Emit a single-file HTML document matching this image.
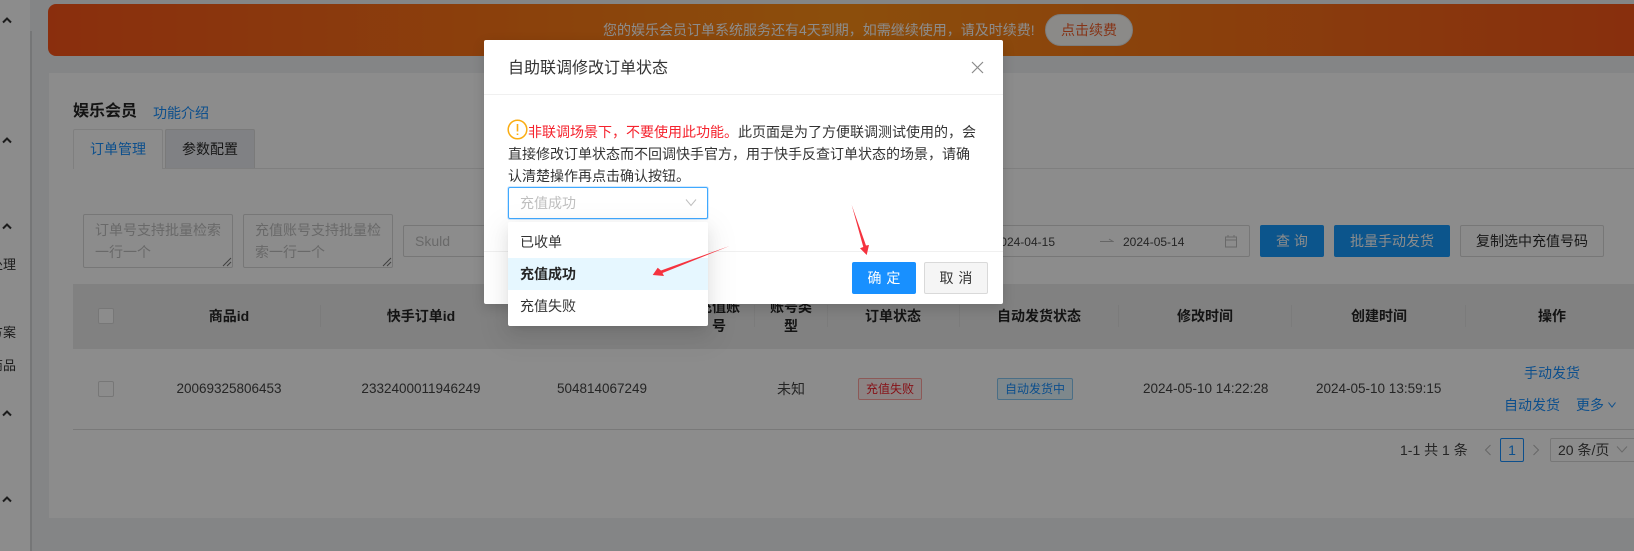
<!DOCTYPE html>
<html lang="zh">
<head>
<meta charset="utf-8">
<title>自助联调修改订单状态</title>
<style>
html,body{margin:0;padding:0;width:1634px;height:551px;overflow:hidden;background:#f0f2f5}
body{position:relative;font-family:"Liberation Sans","Noto Sans CJK SC",sans-serif;font-size:14px;color:#333}
div,span,svg{position:absolute;box-sizing:border-box}
.t{white-space:nowrap;line-height:22px;height:22px}
.c{transform:translateX(-50%);text-align:center}
.h{font-weight:700;color:#262626}
.n{font-size:13.5px;color:#444}
.l{color:#1890ff}
.sep{width:1px;height:22px;top:305px;background:#e0e0e0}
.box{border:1px solid #d9d9d9;border-radius:2px}
.ph{color:#bfbfbf}
.btn{border-radius:2px;text-align:center;height:32px;line-height:30px;white-space:nowrap}
</style>
</head>
<body>
<!-- sidebar -->
<div style="left:0;top:0;width:30px;height:551px;background:#fff"></div>
<div style="left:30px;top:31px;width:2px;height:520px;background:#d6d7d9"></div>
<svg style="left:2px;top:16px" width="10" height="8" viewBox="0 0 10 8"><path d="M1 6.500L5 2.500L9 6.500" fill="none" stroke="#333" stroke-width="2"/></svg>
<svg style="left:2px;top:136px" width="10" height="8" viewBox="0 0 10 8"><path d="M1 6.500L5 2.500L9 6.500" fill="none" stroke="#333" stroke-width="2"/></svg>
<svg style="left:2px;top:222px" width="10" height="8" viewBox="0 0 10 8"><path d="M1 6.500L5 2.500L9 6.500" fill="none" stroke="#333" stroke-width="2"/></svg>
<svg style="left:2px;top:409px" width="10" height="8" viewBox="0 0 10 8"><path d="M1 6.500L5 2.500L9 6.500" fill="none" stroke="#333" stroke-width="2"/></svg>
<svg style="left:2px;top:495px" width="10" height="8" viewBox="0 0 10 8"><path d="M1 6.500L5 2.500L9 6.500" fill="none" stroke="#333" stroke-width="2"/></svg>
<div class="t" style="right:1618px;top:254px;font-size:13px">处理</div>
<div class="t" style="right:1618px;top:322px;font-size:13px">方案</div>
<div class="t" style="right:1618px;top:355px;font-size:13px">商品</div>

<!-- banner -->
<div style="left:48px;top:4px;width:1586px;height:52px;border-radius:8px 0 0 8px;background:linear-gradient(90deg,#fb5519 0%,#ff8f16 50%,#f75619 100%)"></div>
<div class="t" style="left:603px;top:19px;color:#fff">您的娱乐会员订单系统服务还有4天到期，如需继续使用，请及时续费!</div>
<div style="left:1045px;top:14px;width:88px;height:32px;border-radius:16px;background:#fdfbf8;border:1px solid #e4e4e4"></div>
<div class="t" style="left:1061px;top:19px;color:#f4602a">点击续费</div>

<!-- panel -->
<div style="left:49px;top:73px;width:1585px;height:445px;background:#fff"></div>
<div class="t" style="left:73px;top:101px;font-size:16px;font-weight:700;color:#262626">娱乐会员</div>
<div class="t l" style="left:153px;top:102px">功能介绍</div>
<div style="left:73px;top:168px;width:1561px;height:1px;background:#e8e8e8"></div>
<div style="left:73px;top:129px;width:90px;height:40px;background:#fff;border:1px solid #e8e8e8;border-bottom:0;border-radius:2px 2px 0 0"></div>
<div class="t l" style="left:90px;top:138px">订单管理</div>
<div style="left:165px;top:129px;width:90px;height:39px;background:#e9ebf0;border:1px solid #dedede;border-bottom:0;border-radius:2px 2px 0 0"></div>
<div class="t" style="left:182px;top:138px;color:#2a2a2a">参数配置</div>

<!-- filters -->
<div class="box" style="left:83px;top:214px;width:150px;height:54px"></div>
<div class="t ph" style="left:95px;top:219px">订单号支持批量检索</div>
<div class="t ph" style="left:95px;top:241px">一行一个</div>
<svg style="left:222px;top:257px" width="10" height="10" viewBox="0 0 10 10"><path d="M1 9L9 1M5 9L9 5" stroke="#777" fill="none"/></svg>
<div class="box" style="left:243px;top:214px;width:150px;height:54px"></div>
<div class="t ph" style="left:255px;top:219px">充值账号支持批量检</div>
<div class="t ph" style="left:255px;top:241px">索一行一个</div>
<svg style="left:382px;top:257px" width="10" height="10" viewBox="0 0 10 10"><path d="M1 9L9 1M5 9L9 5" stroke="#777" fill="none"/></svg>
<div class="box" style="left:403px;top:225px;width:120px;height:32px"></div>
<div class="t ph" style="left:415px;top:230px">Skuld</div>
<div class="box" style="left:960px;top:225px;width:290px;height:32px"></div>
<div class="t" style="right:579px;top:231px;font-size:12px;color:#444">2024-04-15</div>
<svg style="left:1100px;top:237px" width="14" height="8" viewBox="0 0 14 8"><path d="M0 4.500H13L9 2" fill="none" stroke="#bbb"/></svg>
<div class="t" style="left:1123px;top:231px;font-size:12px;color:#444">2024-05-14</div>
<svg style="left:1224px;top:234px" width="14" height="14" viewBox="0 0 14 14"><path d="M1.500 3H12.500V13H1.500ZM1.500 6H12.500M4 1V3M10 1V3" fill="none" stroke="#bfbfbf"/></svg>
<div class="btn" style="left:1260px;top:225px;width:64px;background:#169cff;color:#fff;line-height:32px">查 询</div>
<div class="btn" style="left:1334px;top:225px;width:116px;background:#169cff;color:#fff;line-height:32px">批量手动发货</div>
<div class="btn" style="left:1460px;top:225px;width:144px;background:#fdfdfd;border:1px solid #d9d9d9;color:#2e2e2e">复制选中充值号码</div>

<!-- table head -->
<div style="left:73px;top:284px;width:1561px;height:65px;background:#ececec"></div>
<div class="box" style="left:98px;top:308px;width:16px;height:16px;background:#fff"></div>
<div class="sep" style="left:320px"></div>
<div class="sep" style="left:754px"></div>
<div class="sep" style="left:827px"></div>
<div class="sep" style="left:959px"></div>
<div class="sep" style="left:1118px"></div>
<div class="sep" style="left:1291px"></div>
<div class="sep" style="left:1465px"></div>
<div class="t c h" style="left:229px;top:305px">商品id</div>
<div class="t c h" style="left:421px;top:305px">快手订单id</div>
<div class="t c h" style="left:719px;top:296px">充值账</div>
<div class="t c h" style="left:719px;top:315px">号</div>
<div class="t c h" style="left:791px;top:296px">账号类</div>
<div class="t c h" style="left:791px;top:315px">型</div>
<div class="t c h" style="left:893px;top:305px">订单状态</div>
<div class="t c h" style="left:1039px;top:305px">自动发货状态</div>
<div class="t c h" style="left:1205px;top:305px">修改时间</div>
<div class="t c h" style="left:1379px;top:305px">创建时间</div>
<div class="t c h" style="left:1552px;top:305px">操作</div>

<!-- table row -->
<div style="left:73px;top:429px;width:1561px;height:1px;background:#dcdcdc"></div>
<div class="box" style="left:98px;top:381px;width:16px;height:16px"></div>
<div class="t c n" style="left:229px;top:378px">20069325806453</div>
<div class="t c n" style="left:421px;top:378px">2332400011946249</div>
<div class="t c n" style="left:602px;top:378px">504814067249</div>
<div class="t c" style="left:791px;top:378px;color:#444">未知</div>
<div style="left:858px;top:378px;width:64px;height:22px;background:#fff1f0;border:1px solid #ffa39e;border-radius:2px"></div>
<div class="t c" style="left:890px;top:379px;font-size:12px;line-height:20px;color:#f5222d">充值失败</div>
<div style="left:997px;top:378px;width:76px;height:22px;background:#e6f7ff;border:1px solid #87c8f5;border-radius:2px"></div>
<div class="t c" style="left:1035px;top:379px;font-size:12px;line-height:20px;color:#1890ff">自动发货中</div>
<div class="t n" style="left:1143px;top:378px">2024-05-10 14:22:28</div>
<div class="t n" style="left:1316px;top:378px">2024-05-10 13:59:15</div>
<div class="t c l" style="left:1552px;top:362px">手动发货</div>
<div class="t l" style="left:1504px;top:394px">自动发货</div>
<div class="t l" style="left:1576px;top:394px">更多</div>
<svg style="left:1607px;top:401px" width="10" height="8" viewBox="0 0 10 8"><path d="M1.500 1.500L5 6L8.500 1.500" fill="none" stroke="#1890ff"/></svg>

<!-- pagination -->
<div class="t" style="left:1400px;top:439px;color:#444">1-1 共 1 条</div>
<svg style="left:1483px;top:444px" width="10" height="12" viewBox="0 0 10 12"><path d="M7.500 1L2.500 6L7.500 11" fill="none" stroke="#bbb"/></svg>
<div style="left:1500px;top:438px;width:24px;height:24px;border:1px solid #1890ff;border-radius:2px"></div>
<div class="t c l" style="left:1512px;top:439px">1</div>
<svg style="left:1531px;top:444px" width="10" height="12" viewBox="0 0 10 12"><path d="M2.500 1L7.500 6L2.500 11" fill="none" stroke="#bbb"/></svg>
<div class="box" style="left:1550px;top:438px;width:100px;height:24px"></div>
<div class="t" style="left:1558px;top:439px;color:#444">20 条/页</div>
<svg style="left:1616px;top:445px" width="12" height="9" viewBox="0 0 12 9"><path d="M1 1.500L6 7L11 1.500" fill="none" stroke="#bfbfbf"/></svg>

<!-- modal mask -->
<div style="left:0;top:0;width:1634px;height:551px;background:rgba(0,0,0,.45)"></div>

<!-- dialog -->
<div style="left:484px;top:40px;width:519px;height:264px;background:#fff;border-radius:2px;box-shadow:0 4px 12px rgba(0,0,0,.15)"></div>
<div class="t" style="left:508px;top:58px;font-size:16px;color:#333">自助联调修改订单状态</div>
<svg style="left:971px;top:61px" width="13" height="13" viewBox="0 0 13 13"><path d="M1 1L12 12M12 1L1 12" stroke="#8a8a8a" stroke-width="1.200" fill="none"/></svg>
<div style="left:484px;top:94px;width:519px;height:1px;background:#f0f0f0"></div>
<svg style="left:507px;top:119px" width="21" height="21" viewBox="0 0 21 21"><circle cx="10.500" cy="10.500" r="9.300" fill="none" stroke="#faad14" stroke-width="1.500"/><path d="M10.500 5V12.500M10.500 14.500V16" stroke="#faad14" stroke-width="1.600" fill="none"/></svg>
<div class="t" style="left:528px;top:121px;color:#f5222d">非联调场景下，不要使用此功能。</div>
<div class="t" style="left:738px;top:121px;color:#333">此页面是为了方便联调测试使用的，会</div>
<div class="t" style="left:508px;top:143px;color:#333">直接修改订单状态而不回调快手官方，用于快手反查订单状态的场景，请确</div>
<div class="t" style="left:508px;top:165px;color:#333">认清楚操作再点击确认按钮。</div>
<div style="left:508px;top:187px;width:200px;height:32px;border:1px solid #40a9ff;border-radius:2px;background:#fff;box-shadow:0 0 0 1px rgba(24,144,255,.2)"></div>
<div class="t" style="left:520px;top:192px;color:#bfbfbf">充值成功</div>
<svg style="left:685px;top:198px" width="12" height="9" viewBox="0 0 12 9"><path d="M1 1.500L6 7.500L11 1.500" fill="none" stroke="#bfbfbf"/></svg>
<div style="left:484px;top:251px;width:519px;height:1px;background:#f0f0f0"></div>
<div class="btn" style="left:852px;top:262px;width:64px;background:#1890ff;color:#fff;line-height:32px;word-spacing:1px">确 定</div>
<div class="btn" style="left:924px;top:262px;width:64px;background:#f5f5f5;border:1px solid #d9d9d9;color:#333;word-spacing:1px">取 消</div>

<!-- dropdown -->
<div style="left:508px;top:222px;width:200px;height:104px;background:#fff;border-radius:2px;box-shadow:0 3px 6px -4px rgba(0,0,0,.12),0 6px 16px 0 rgba(0,0,0,.08),0 9px 28px 8px rgba(0,0,0,.05)"></div>
<div style="left:508px;top:258px;width:200px;height:32px;background:#e6f7ff"></div>
<div class="t" style="left:520px;top:231px;color:#333">已收单</div>
<div class="t" style="left:520px;top:263px;font-weight:700;color:#262626">充值成功</div>
<div class="t" style="left:520px;top:295px;color:#333">充值失败</div>

<!-- annotation arrows -->
<svg style="left:0;top:0" width="1634" height="551" viewBox="0 0 1634 551">
<path d="M729.500 246L661 270.500L657.700 267.700L652.700 275L664 276L662.500 273Z" fill="#f5333f"/>
<path d="M851.700 205L863.300 247L860 248.300L866.700 255L869 245L866 245.500Z" fill="#f5333f"/>
</svg>
</body>
</html>
